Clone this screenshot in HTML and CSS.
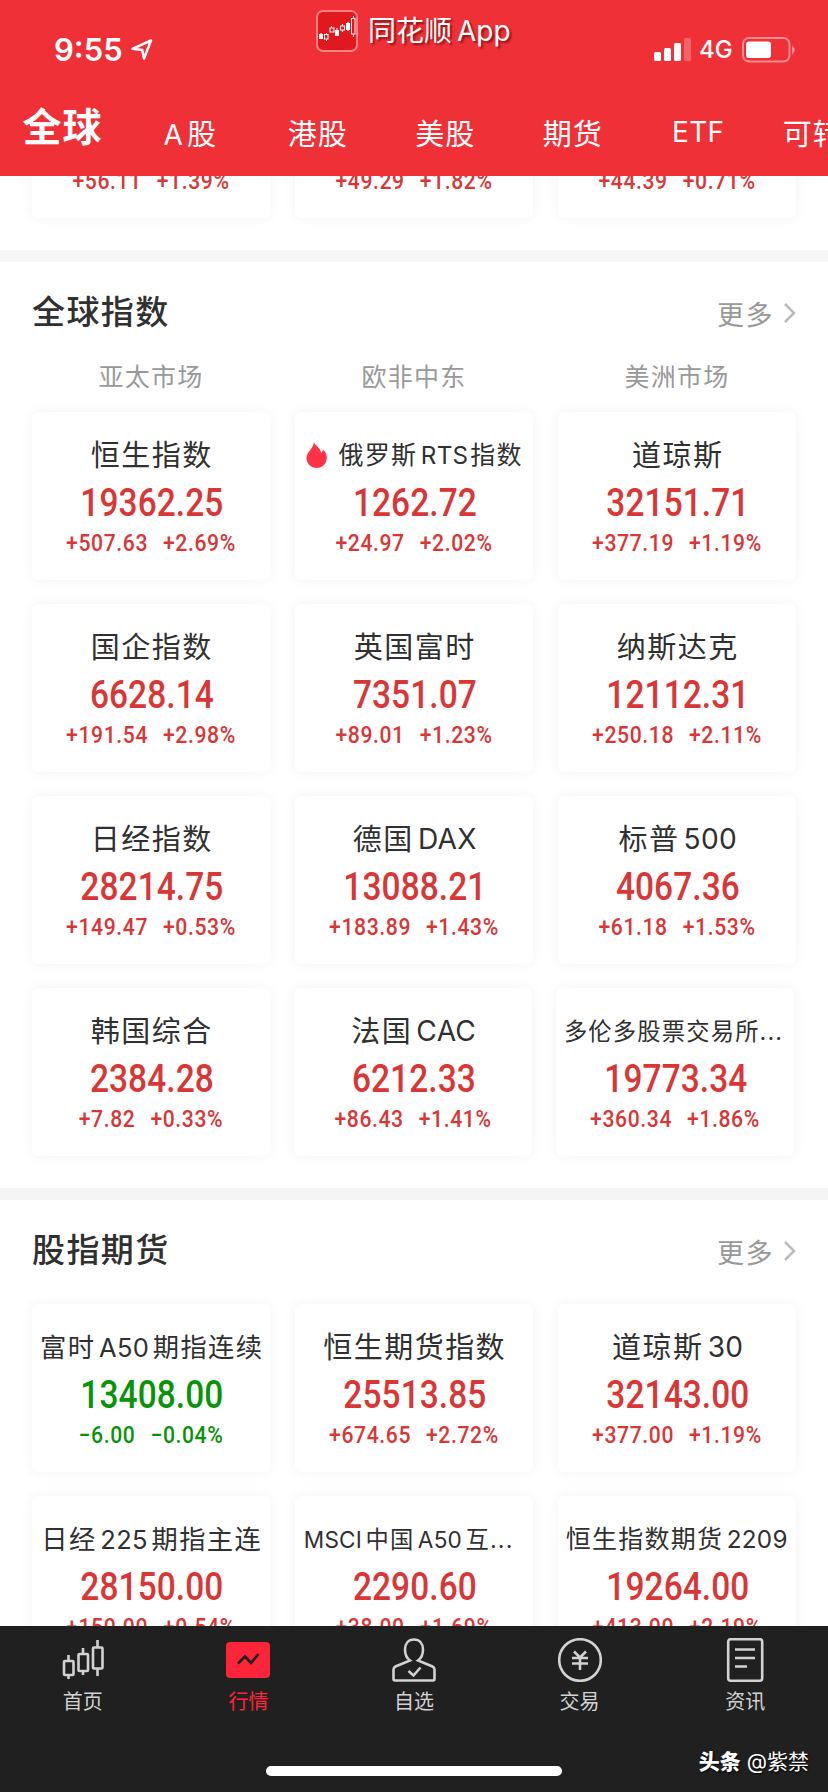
FILE: index.html
```
<!DOCTYPE html>
<html lang="zh-CN">

<head>
    <meta charset="UTF-8">
    <meta name="viewport" content="width=device-width, initial-scale=1.0">
    <title>全球行情</title>
    <link rel="stylesheet" href="styles.css">
</head>

<body>
    <div class="app">
        <header class="header">
            <div class="status">
                <span class="time">9:55</span>
                <svg class="location" width="22" height="22" viewBox="0 0 22 22">
                    <path d="M1.5 9.8 L20 1.5 L13 19.5 L11.2 11 Z" />
                </svg>
                <svg class="signal" width="38" height="23" viewBox="0 0 38 23">
                    <rect x="0" y="14" width="7" height="9" rx="1.5" />
                    <rect x="10" y="10" width="7" height="13" rx="1.5" />
                    <rect x="20" y="5" width="7" height="18" rx="1.5" />
                    <rect x="30" y="0" width="7" height="23" rx="1.5" opacity=".25" />
                </svg>
                <span class="network">4G</span>
                <svg class="battery" width="54" height="26" viewBox="0 0 54 26">
                    <rect x="1" y="1" width="46.5" height="23.5" rx="6" class="battery-frame" />
                    <rect x="4" y="4.5" width="25" height="16.5" rx="3" fill="#fff" />
                    <path d="M50 8.5 q5.500 4.500 0 9 z" fill="#fff" opacity=".45" />
                </svg>
            </div>
            <div class="brand">
                <svg width="42" height="42" viewBox="0 0 42 42">
                    <rect x="1" y="1" width="40" height="40" rx="6" fill="#e0191f" stroke="#f98185" stroke-width="2" />
                    <g fill="#fff" stroke="#fff" stroke-width="1">
                        <path d="M5 23v6M21 18v8M32 12v9" />
                        <rect x="3.500" y="24.500" width="3" height="4" />
                        <rect x="19.500" y="20.500" width="3" height="5" />
                        <rect x="30.500" y="13.500" width="3" height="6" />
                    </g>
                    <g fill="none" stroke="#fff" stroke-width="1">
                        <path d="M10.500 23v2M10.500 29v2M15.500 16v2M26.500 14v2M26.500 20v2M37.500 6v3M37.500 24v3" />
                        <rect x="8.500" y="24.500" width="3.500" height="4.500" />
                        <rect x="14" y="18" width="4" height="4" />
                        <rect x="24.500" y="16" width="4" height="4" />
                        <rect x="35.500" y="8.500" width="3.500" height="15.500" />
                    </g>
                </svg>
                <span>同花顺<b>App</b></span>
            </div>
            <nav class="tabs">
                <a class="tab active">全球</a>
                <a class="tab"><b>A</b>股</a>
                <a class="tab">港股</a>
                <a class="tab">美股</a>
                <a class="tab">期货</a>
                <a class="tab"><b>ETF</b></a>
                <a class="tab">可转债</a>
            </nav>
        </header>

        <main class="content">
            <section class="section first">
                <div class="row">
                    <div class="card">
                        <div class="name"></div>
                        <div class="value"></div>
                        <div class="change"><span>+56.11</span><span>+1.39%</span></div>
                    </div>
                    <div class="card">
                        <div class="name"></div>
                        <div class="value"></div>
                        <div class="change"><span>+49.29</span><span>+1.82%</span></div>
                    </div>
                    <div class="card">
                        <div class="name"></div>
                        <div class="value"></div>
                        <div class="change"><span>+44.39</span><span>+0.71%</span></div>
                    </div>
                </div>
            </section>

            <section class="section">
                <div class="section-head">
                    <h2>全球指数</h2>
                    <a class="more">更多<svg width="14" height="22" viewBox="0 0 14 22"><path d="M2 2l9 9-9 9" /></svg></a>
                </div>
                <div class="markets">
                    <span>亚太市场</span>
                    <span>欧非中东</span>
                    <span>美洲市场</span>
                </div>
                <div class="row">
                    <div class="card">
                        <div class="name">恒生指数</div>
                        <div class="value">19362.25</div>
                        <div class="change"><span>+507.63</span><span>+2.69%</span></div>
                    </div>
                    <div class="card">
                        <div class="name size-m"><svg class="fire" width="22" height="26" viewBox="0 0 22 26"><path d="M8 0c.6 3.500 6.500 5.500 7.200 11 1-.8 1.500-2 1.600-3.500 2.500 2.300 4 4.700 4 8C20.800 21.500 16.500 26 10.700 26S.5 21.700.5 15.800C.5 9.500 7.500 7 8 0z" /></svg>俄罗斯<b>RTS</b>指数</div>
                        <div class="value">1262.72</div>
                        <div class="change"><span>+24.97</span><span>+2.02%</span></div>
                    </div>
                    <div class="card">
                        <div class="name">道琼斯</div>
                        <div class="value">32151.71</div>
                        <div class="change"><span>+377.19</span><span>+1.19%</span></div>
                    </div>
                </div>
                <div class="row">
                    <div class="card">
                        <div class="name">国企指数</div>
                        <div class="value">6628.14</div>
                        <div class="change"><span>+191.54</span><span>+2.98%</span></div>
                    </div>
                    <div class="card">
                        <div class="name">英国富时</div>
                        <div class="value">7351.07</div>
                        <div class="change"><span>+89.01</span><span>+1.23%</span></div>
                    </div>
                    <div class="card">
                        <div class="name">纳斯达克</div>
                        <div class="value">12112.31</div>
                        <div class="change"><span>+250.18</span><span>+2.11%</span></div>
                    </div>
                </div>
                <div class="row">
                    <div class="card">
                        <div class="name">日经指数</div>
                        <div class="value">28214.75</div>
                        <div class="change"><span>+149.47</span><span>+0.53%</span></div>
                    </div>
                    <div class="card">
                        <div class="name">德国<b>DAX</b></div>
                        <div class="value">13088.21</div>
                        <div class="change"><span>+183.89</span><span>+1.43%</span></div>
                    </div>
                    <div class="card">
                        <div class="name">标普<b>500</b></div>
                        <div class="value">4067.36</div>
                        <div class="change"><span>+61.18</span><span>+1.53%</span></div>
                    </div>
                </div>
                <div class="row tight">
                    <div class="card">
                        <div class="name">韩国综合</div>
                        <div class="value">2384.28</div>
                        <div class="change"><span>+7.82</span><span>+0.33%</span></div>
                    </div>
                    <div class="card">
                        <div class="name">法国<b>CAC</b></div>
                        <div class="value">6212.33</div>
                        <div class="change"><span>+86.43</span><span>+1.41%</span></div>
                    </div>
                    <div class="card">
                        <div class="name size-s clipped">多伦多股票交易所<em>...</em></div>
                        <div class="value">19773.34</div>
                        <div class="change"><span>+360.34</span><span>+1.86%</span></div>
                    </div>
                </div>
            </section>

            <section class="section futures">
                <div class="section-head">
                    <h2>股指期货</h2>
                    <a class="more">更多<svg width="14" height="22" viewBox="0 0 14 22"><path d="M2 2l9 9-9 9" /></svg></a>
                </div>
                <div class="row">
                    <div class="card">
                        <div class="name size-l">富时<b>A50</b>期指连续</div>
                        <div class="value down">13408.00</div>
                        <div class="change down"><span>−6.00</span><span>−0.04%</span></div>
                    </div>
                    <div class="card">
                        <div class="name">恒生期货指数</div>
                        <div class="value">25513.85</div>
                        <div class="change"><span>+674.65</span><span>+2.72%</span></div>
                    </div>
                    <div class="card">
                        <div class="name">道琼斯<b>30</b></div>
                        <div class="value">32143.00</div>
                        <div class="change"><span>+377.00</span><span>+1.19%</span></div>
                    </div>
                </div>
                <div class="row">
                    <div class="card">
                        <div class="name size-l">日经<b>225</b>期指主连</div>
                        <div class="value">28150.00</div>
                        <div class="change"><span>+150.00</span><span>+0.54%</span></div>
                    </div>
                    <div class="card">
                        <div class="name size-s msci"><b>MSCI</b>中国<b>A50</b>互<em>...</em></div>
                        <div class="value">2290.60</div>
                        <div class="change"><span>+38.00</span><span>+1.69%</span></div>
                    </div>
                    <div class="card">
                        <div class="name size-m">恒生指数期货<b>2209</b></div>
                        <div class="value">19264.00</div>
                        <div class="change"><span>+413.00</span><span>+2.19%</span></div>
                    </div>
                </div>
            </section>
        </main>

        <footer class="footer">
            <nav class="menu">
                <a class="menu-item">
                    <svg width="44" height="44" viewBox="0 0 44 44">
                        <path d="M7.500 17v6M7.500 37v4M22 10v6M22 33v4M36.500 2v7M36.500 30v8" />
                        <rect x="3" y="23" width="9.500" height="14" rx="1" />
                        <rect x="17.500" y="16" width="9.500" height="17" rx="1" />
                        <rect x="32" y="9.500" width="9.500" height="21" rx="1" />
                    </svg>
                    首页
                </a>
                <a class="menu-item active">
                    <svg width="44" height="44" viewBox="0 0 44 44">
                        <rect x="0" y="4" width="44" height="36" rx="4" class="solid" />
                        <path d="M12 25.500l7-7 6 6.500 7.500-9" class="zigzag" />
                    </svg>
                    行情
                </a>
                <a class="menu-item">
                    <svg width="44" height="44" viewBox="0 0 44 44">
                        <path d="M18 22.500C14.500 20 13 16 13 11.500c0-6 3.500-10 9-10s9 4 9 10c0 4.500-1.500 8.500-5 11l14.500 6q2 1 2 3v9.500q0 1.500-1.500 1.500H3Q1.500 42.500 1.500 41v-9.500q0-2 2-3z" />
                        <path d="M16.500 33l5 4.500 7-8" />
                    </svg>
                    自选
                </a>
                <a class="menu-item">
                    <svg width="44" height="44" viewBox="0 0 44 44">
                        <circle cx="22" cy="22" r="20.800" />
                        <path d="M16 13.500l6 6 6-6M14 20h16M14 25.500h16M22 19.500V32" />
                    </svg>
                    交易
                </a>
                <a class="menu-item">
                    <svg width="44" height="44" viewBox="0 0 44 44">
                        <rect x="5.200" y="1.200" width="34" height="41.500" rx="2.500" />
                        <path d="M12 11.500h20M12 20h20M12 28.500h12" />
                    </svg>
                    资讯
                </a>
            </nav>
            <div class="home-bar"></div>
            <div class="author"><b>头条</b> @紫禁</div>
        </footer>
    </div>
</body>

</html>
```

FILE: styles.css
```
body {
    margin: 0;
    background: #fff;
    font-family: Inter, "Noto Sans CJK SC", sans-serif;
    color: #303030;
}

.app {
    width: 828px;
    height: 1792px;
    display: flex;
    flex-direction: column;
    overflow: hidden;
    position: relative;
}

/* header */
.header {
    height: 176px;
    flex: none;
    background: #ef3037;
    color: #fff;
}

.status {
    display: flex;
    align-items: center;
    height: 99px;
    padding: 0 32px 0 54px;
}

.time {
    font-size: 31px;
    font-weight: 600;
    width: 77px;
}

.location {
    fill: none;
    stroke: #fff;
    stroke-width: 2.5;
    stroke-linejoin: round;
    margin-right: auto;
}

.signal {
    fill: #fff;
    margin-right: 7px;
}

.network {
    font-size: 24px;
    font-weight: 500;
    width: 43px;
}

.battery-frame {
    fill: none;
    stroke: #fff;
    stroke-width: 2;
    opacity: .45;
}

.brand {
    position: absolute;
    left: 316px;
    top: 10px;
    display: flex;
    align-items: center;
    gap: 10px;
    font-size: 28px;
    line-height: 42px;
    text-shadow: 2px 2px 2px rgba(80, 0, 0, .6);
}

.brand b {
    font-weight: 400;
    margin-left: 5px;
}

.tabs {
    display: flex;
    align-items: center;
    height: 65px;
}

.tab {
    flex: none;
    width: 127.5px;
    text-align: center;
    font-size: 29px;
    letter-spacing: 1px;
    text-indent: 1px;
    white-space: nowrap;
}

.tab b {
    font-weight: 400;
    font-size: 28px;
    letter-spacing: 0;
    margin-right: 4px;
}

.tab b:only-child {
    letter-spacing: .3px;
}

.tab.active {
    width: 124px;
    margin-right: 2px;
    padding-bottom: 15px;
    font-size: 39px;
    font-weight: 700;
}

/* sections */
.content {
    height: 1450px;
    overflow: hidden;
}

.section {
    padding: 0 32px 32px;
    border-bottom: 12px solid #f5f5f5;
}

.section.first {
    margin-top: -126px;
}

.section-head {
    display: flex;
    justify-content: space-between;
    align-items: center;
    height: 98px;
}

.section-head h2 {
    margin: 0;
    padding-bottom: 3px;
    font-size: 33px;
    font-weight: 500;
    letter-spacing: 1.4px;
}

.more {
    display: flex;
    align-items: center;
    gap: 9px;
    padding-top: 4px;
    font-size: 27px;
    letter-spacing: 1.5px;
    color: #999;
}

.more svg {
    fill: none;
    stroke: #bbb;
    stroke-width: 2.5;
    margin-right: -1px;
}

.markets {
    display: flex;
    gap: 25px;
    height: 34px;
    line-height: 34px;
    margin-bottom: 18px;
    font-size: 25px;
    letter-spacing: 1.2px;
    color: #999;
}

.markets span {
    width: 238px;
    text-align: center;
}

.futures {
    border-bottom: none;
}

.futures .section-head {
    margin-bottom: 6px;
}

.row {
    display: flex;
    gap: 25px;
    margin-bottom: 24px;
}

.row.tight {
    gap: 24px;
}

.row:last-child {
    margin-bottom: 0;
}

/* cards */
.card {
    box-sizing: border-box;
    flex: none;
    width: 238px;
    height: 168px;
    padding-top: 22px;
    border-radius: 6px;
    background: #fff;
    box-shadow: 0 0 14px rgba(0, 0, 0, .05);
    text-align: center;
    white-space: nowrap;
}

.name {
    display: flex;
    justify-content: center;
    height: 42px;
    line-height: 43px;
    padding-left: .05em;
    font-size: 29px;
    letter-spacing: .05em;
}

.name b {
    font-weight: 400;
    font-size: .97em;
    letter-spacing: .01em;
    margin-left: .15em;
}

.size-l {
    font-size: 26.3px;
}

.size-m {
    font-size: 25px;
}

.size-s {
    font-size: 23.3px;
}

.size-l b,
.size-m b,
.size-s b {
    margin-right: .15em;
}

.size-m b:last-child {
    margin-right: .08em;
}

.name em {
    font-style: normal;
    letter-spacing: .05em;
}

.clipped {
    padding-right: 4px;
}

.name.msci {
    padding: 0 14px 0 0;
}

.fire {
    fill: #ff3347;
    align-self: center;
    margin-right: 10px;
}

/* narrow figures */
.value,
.change {
    font-family: Roboto, sans-serif;
    font-weight: 500;
    color: #d93636;
    transform: scaleX(.88);
}

.value {
    height: 42px;
    line-height: 43px;
    margin-top: 6px;
    padding-left: 2px;
    font-size: 38px;
    letter-spacing: .1px;
}

.change {
    display: flex;
    justify-content: center;
    gap: 17px;
    height: 30px;
    line-height: 30px;
    margin-top: 4px;
    font-size: 24px;
    letter-spacing: .7px;
}

.value.down,
.change.down {
    color: #089308;
}

/* bottom menu */
.footer {
    height: 166px;
    background: #202020;
    position: relative;
}

.menu {
    display: flex;
    padding-top: 12px;
}

.menu-item {
    flex: 1;
    display: flex;
    flex-direction: column;
    align-items: center;
    gap: 5px;
    font-size: 20px;
    line-height: 30px;
    color: #d2d2d2;
}

.menu-item.active {
    color: #ff2538;
}

.menu-item svg {
    fill: none;
    stroke: #d2d2d2;
    stroke-width: 2.6;
}

.menu-item .solid {
    fill: #ff2538;
    stroke: none;
}

.menu-item .zigzag {
    stroke: #202020;
    stroke-width: 2.6;
}

.home-bar {
    position: absolute;
    left: 266px;
    bottom: 16px;
    width: 296px;
    height: 10px;
    border-radius: 5px;
    background: #fff;
}

.author {
    position: absolute;
    right: 19px;
    bottom: 14px;
    font-size: 21px;
    line-height: 32px;
    color: #fff;
    text-shadow: 1px 1px 2px #000;
}

.author b {
    font-weight: 900;
}
```
